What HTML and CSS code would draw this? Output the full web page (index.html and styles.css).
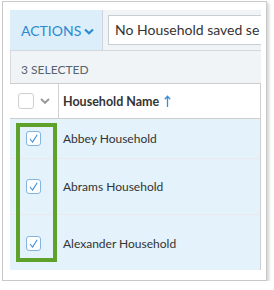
FILE: index.html
```html
<!DOCTYPE html>
<html lang="en">
<head>
  <meta charset="UTF-8">
  <title>Households</title>
  <link rel="stylesheet" href="styles.css">
</head>
<body>
  <div class="frame">
    <div class="panel">
      <!-- toolbar -->
      <div class="toolbar">
        <div class="actions">
          <span>ACTIONS</span>
          <svg class="chev" width="10" height="7" viewBox="0 0 10 7">
            <path d="M1 1.5 L5 5.2 L9 1.5" fill="none" stroke="#2b8ad0" stroke-width="2.2"/>
          </svg>
        </div>
        <div class="search">
          <div class="select">No Household saved se</div>
        </div>
      </div>

      <div class="selected">3 SELECTED</div>

      <!-- table -->
      <div class="table">
        <div class="head">
          <div class="cell-check">
            <span class="box"></span>
            <svg width="10" height="6" viewBox="0 0 10 6">
              <path d="M1 1 L5 4.8 L9 1" fill="none" stroke="#9a9a9a" stroke-width="2"/>
            </svg>
          </div>
          <div class="cell-name">
            Household Name
            <svg class="sort" width="7" height="12" viewBox="0 0 7 12">
              <path d="M3.5 12 V1.5 M0.8 4.2 L3.5 1.2 L6.2 4.2" fill="none" stroke="#3a8fdc" stroke-width="1.3"/>
            </svg>
          </div>
        </div>
        <div class="row row-first">
          <div class="cell-check"><span class="box checked"><svg width="13" height="13" viewBox="0 0 13 13"><path d="M3 7 L5.6 10 L10.2 2.8" fill="none" stroke="#3d8ee0" stroke-width="1.1"/></svg></span></div>
          <div class="cell-name">Abbey Household</div>
        </div>
        <div class="row">
          <div class="cell-check"><span class="box checked"><svg width="13" height="13" viewBox="0 0 13 13"><path d="M3 7 L5.6 10 L10.2 2.8" fill="none" stroke="#3d8ee0" stroke-width="1.1"/></svg></span></div>
          <div class="cell-name">Abrams Household</div>
        </div>
        <div class="row row-last">
          <div class="cell-check"><span class="box checked"><svg width="13" height="13" viewBox="0 0 13 13"><path d="M3 7 L5.6 10 L10.2 2.8" fill="none" stroke="#3d8ee0" stroke-width="1.1"/></svg></span></div>
          <div class="cell-name">Alexander Household</div>
        </div>
      </div>

      <!-- highlight -->
      <div class="highlight"></div>
    </div>
  </div>
</body>
</html>
```

FILE: styles.css
```css
body {
  margin: 0;
  background: #fff;
  font-family: "Lato", "Liberation Sans", sans-serif;
  color: #333;
}

.frame {
  margin: 1px 0 0 2px;
  width: 253px;
  height: 260px;
  padding: 8px 3px 10px 7px;
  border: 1px solid #c9c9c9;
  box-shadow: 2px 2px 3px rgba(0, 0, 0, 0.18);
  background: #fff;
}

.panel {
  position: relative;
  width: 251px;
  height: 260px;
  background: #f0f4f7;
  overflow: hidden;
  box-shadow: inset 1px 0 0 #d6dbe0;
}

/* toolbar */
.toolbar {
  display: flex;
  height: 40px;
  border-bottom: 1px solid #d3d9de;
}

.actions {
  width: 93px;
  flex: none;
  display: flex;
  align-items: center;
  gap: 3px;
  padding-left: 11px;
  box-sizing: border-box;
  background: #dbeef9;
  border-right: 1px solid #cdd6dd;
  color: #2b8ad0;
  font-size: 14px;
}

.chev {
  margin-top: 2px;
}

.search {
  flex: 1;
  padding: 5px 0 5px 5px;
}

.select {
  height: 28px;
  line-height: 28px;
  padding-left: 6px;
  background: #fff;
  border: 1px solid #c9ced3;
  border-right: none;
  font-size: 14px;
  color: #333;
  white-space: nowrap;
  overflow: hidden;
}

.selected {
  height: 32px;
  line-height: 37px;
  padding-left: 11px;
  font-size: 12px;
  color: #56646f;
}

/* table */
.table {
  width: 250px;
  border-right: 1px solid #cfcfcf;
}

.head {
  display: flex;
  height: 34px;
  background: #fff;
  border-top: 1px solid #cdcdcd;
  border-bottom: 1px solid #cdcdcd;
}

.head .cell-check {
  width: 49px;
  flex: none;
  display: flex;
  align-items: center;
  gap: 6px;
  padding-left: 8px;
  box-sizing: border-box;
  border-right: 1px solid #d0d0d0;
}

.head .cell-name {
  display: flex;
  align-items: center;
  gap: 5px;
  padding-left: 4px;
  font-size: 12.5px;
  font-weight: bold;
  color: #333;
}

.box {
  display: inline-flex;
  align-items: center;
  justify-content: center;
  width: 16px;
  height: 16px;
  box-sizing: border-box;
  border: 1px solid #cfcfcf;
  border-radius: 3px;
  background: #fff;
}

.box.checked {
  width: 15px;
  height: 15px;
  border-color: #84b3e6;
}

.row {
  display: flex;
  align-items: center;
  height: 55px;
  background: #e4f2fb;
  border-top: 1px solid #ece8ec;
}

.row-first {
  height: 39px;
  border-top: none;
}

.row-last {
  height: 56px;
}

.row .cell-check {
  width: 53px;
  flex: none;
  padding-left: 16px;
  box-sizing: border-box;
  display: flex;
}

.row .cell-name {
  font-size: 12px;
  color: #333;
}

.highlight {
  position: absolute;
  left: 6px;
  top: 113px;
  width: 33px;
  height: 131px;
  border: 4px solid #5ea22c;
}
```
